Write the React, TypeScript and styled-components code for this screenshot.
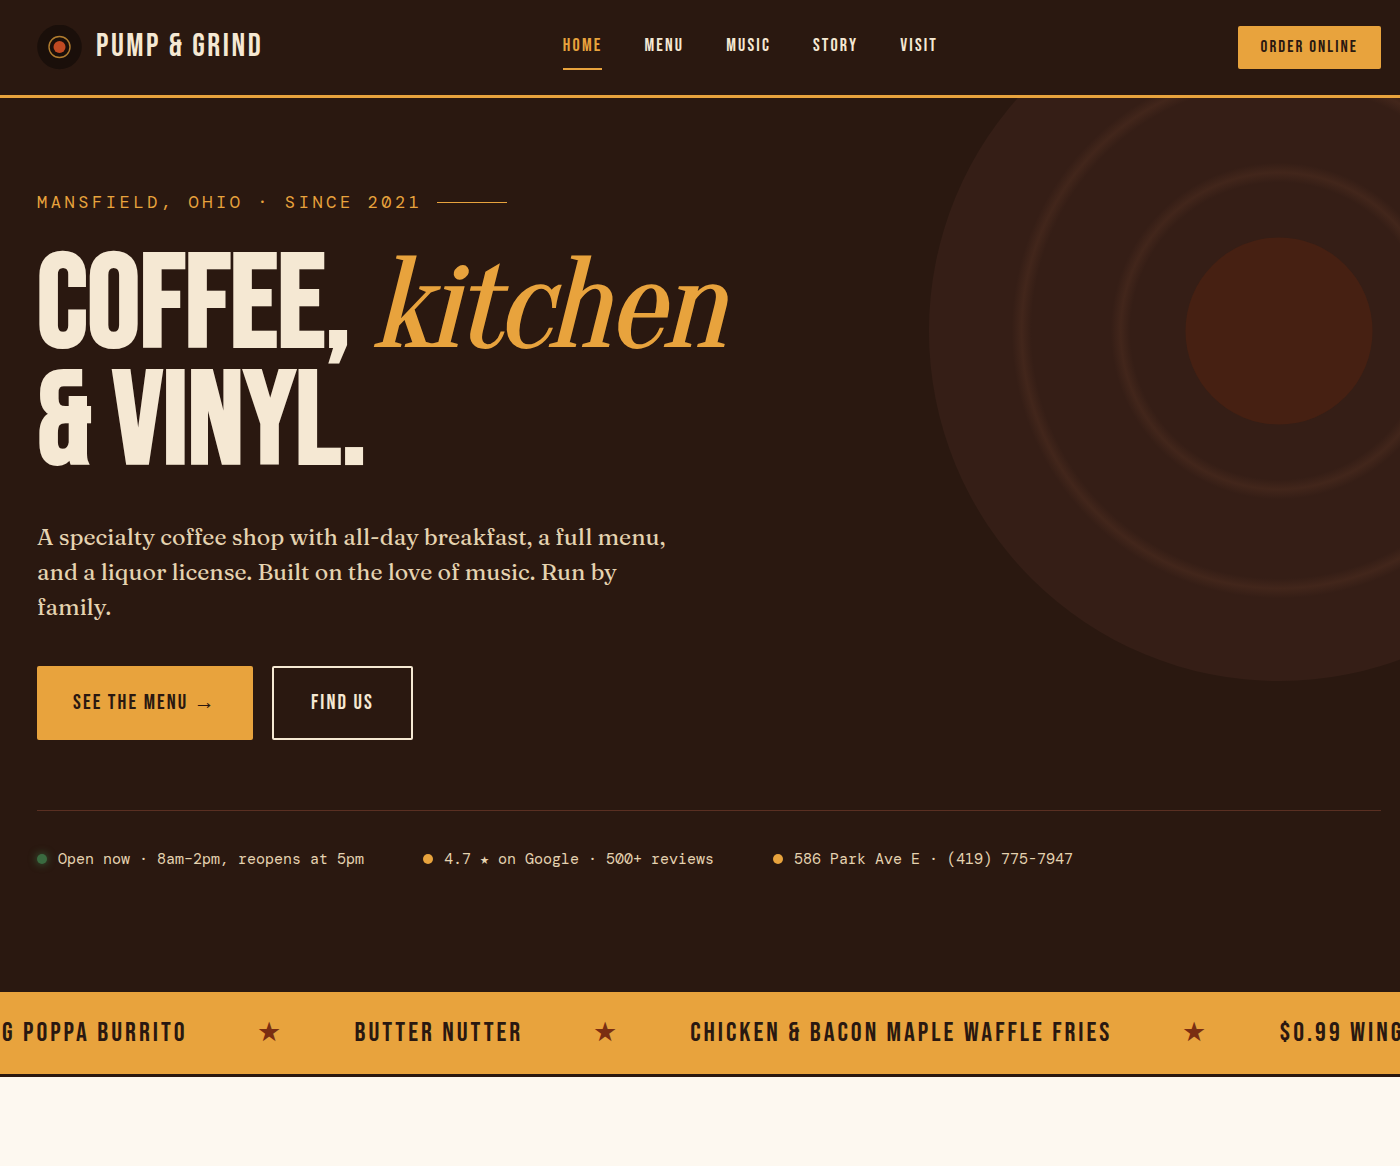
import React from "react";
import styled, { createGlobalStyle } from "styled-components";

const color = {
  espresso: "#2a1810",
  black: "#1a0f0a",
  cream: "#f5e8d3",
  sand: "#e5d3b0",
  amber: "#e8a33d",
  rust: "#7a2e12",
  ember: "#c14a22",
  line: "#5a2f22",
  green: "#3a6b40",
  paper: "#fdf8f0",
};
const display = `"Bebas Neue", "Liberation Sans", sans-serif`;
const serif = `Fraunces, "Liberation Serif", serif`;
const mono = `"DM Mono", "DejaVu Sans Mono", monospace`;

const GlobalStyle = createGlobalStyle`
  * { box-sizing: border-box; }
  body { margin: 0; background: ${color.paper}; color: ${color.espresso}; font-family: ${serif}; }
  a { color: inherit; text-decoration: none; }
`;
const Page = styled.div`
  min-height: 100vh;
  overflow-x: hidden;
`;
const Header = styled.header`
  display: flex;
  align-items: center;
  justify-content: space-between;
  padding: 25px 19px 25px 37px;
  background: ${color.espresso};
  border-bottom: 3px solid ${color.amber};
`;
const Brand = styled.a`
  display: flex;
  gap: 14px;
  font: 400 32px/44px ${display};
  letter-spacing: 0.08em;
  && { color: ${color.cream}; }
`;
const BrandMark = styled.svg`
  display: block;
  width: 45px;
  height: 45px;
`;
const Nav = styled.nav`
  display: flex;
  gap: 42px;
`;
const NavLink = styled.a<{ $active?: boolean }>`
  padding: 10px 0 11px;
  font: 400 18px/22px ${display};
  letter-spacing: 0.12em;
  border-bottom: 2px solid ${(p) => (p.$active ? color.amber : "transparent")};
  && { color: ${(p) => (p.$active ? color.amber : color.cream)}; }
`;
const OrderButton = styled.button`
  padding: 12px 23px;
  border: 0;
  border-radius: 2px;
  background: ${color.amber};
  color: ${color.espresso};
  font: 400 17px/19px ${display};
  letter-spacing: 0.12em;
  cursor: pointer;
`;
const Hero = styled.section`
  position: relative;
  overflow: hidden;
  padding: 92px 19px 121px 37px;
  background: ${color.espresso};
`;
const Record = styled.svg`
  position: absolute;
  top: -117px;
  right: -229px;
  width: 700px;
  height: 700px;
`;
const HeroBody = styled.div`
  position: relative;
`;
const Eyebrow = styled.p`
  display: flex;
  align-items: center;
  gap: 14px;
  margin: 0 0 34px;
  color: ${color.amber};
  font: 400 17px/24px ${mono};
  letter-spacing: 0.21em;
  &::after {
    content: "";
    width: 70px;
    height: 1px;
    background: currentColor;
  }
`;
const Title = styled.h1`
  margin: 0 0 38px;
  color: ${color.cream};
  font: 700 131px/117px ${display};
`;
const Accent = styled.em`
  color: ${color.amber};
  font: italic 400 128px/1px Oranienbaum, ${serif};
  letter-spacing: -0.03em;
  -webkit-text-stroke: 2px ${color.amber};
`;
const Lede = styled.p`
  max-width: 654px;
  margin: 0 0 41px;
  color: ${color.sand};
  font: 400 23px/35px ${serif};
`;
const Actions = styled.div`
  display: flex;
  gap: 19px;
  margin-bottom: 70px;
`;
const Action = styled.a<{ $solid?: boolean }>`
  padding: ${(p) => (p.$solid ? "25px 36px" : "23px 37px")};
  border: ${(p) => (p.$solid ? "0" : `2px solid ${color.cream}`)};
  border-radius: 2px;
  background: ${(p) => (p.$solid ? color.amber : "transparent")};
  font: 400 21px/24px ${display};
  letter-spacing: 0.1em;
  && { color: ${(p) => (p.$solid ? color.espresso : color.cream)}; }
`;
const Facts = styled.ul`
  display: flex;
  flex-wrap: wrap;
  gap: 14px 59px;
  margin: 0;
  padding: 36px 0 0;
  border-top: 1px solid ${color.line};
  list-style: none;
  color: ${color.sand};
  font: 400 15px/24px ${mono};
`;
const Fact = styled.li`
  display: flex;
  align-items: center;
  gap: 11px;
`;
const Dot = styled.span<{ $live?: boolean }>`
  width: 10px;
  height: 10px;
  border-radius: 50%;
  background: ${(p) => (p.$live ? color.green : color.amber)};
  box-shadow: ${(p) => (p.$live ? `0 0 9px ${color.green}` : "none")};
`;
const Ticker = styled.div`
  overflow: hidden;
  background: ${color.amber};
  border-bottom: 3px solid ${color.espresso};
`;
const TickerTrack = styled.div`
  display: flex;
  margin-left: -20px;
  padding: 23px 0 22px;
`;
const TickerItem = styled.span`
  flex: none;
  padding-right: 70px;
  font: 400 27px/37px ${display};
  letter-spacing: 3px;
`;
const Star = styled(TickerItem)`
  color: ${color.rust};
`;

const links = ["Home", "Menu", "Music", "Story", "Visit"];
const ticker = ["Big Poppa Burrito", "Butter Nutter", "Chicken & Bacon Maple Waffle Fries", "$0.99 Wings"];

export default function App() {
  return (
    <Page>
      <GlobalStyle />
      <Header>
        <Brand href="#home">
          <BrandMark viewBox="0 0 45 45" aria-hidden="true">
            <circle cx="22.5" cy="22" r="22.3" fill={color.black} />
            <circle cx="22.5" cy="22" r="10.5" fill="none" stroke="#b07c2f" strokeWidth="1.4" />
            <circle cx="22.5" cy="22" r="6" fill={color.ember} />
          </BrandMark>
          Pump &amp; Grind
        </Brand>
        <Nav aria-label="Main">
          {links.map((name, i) => (
            <NavLink key={name} href={`#${name.toLowerCase()}`} $active={i === 0}>
              {name}
            </NavLink>
          ))}
        </Nav>
        <OrderButton type="button">Order Online</OrderButton>
      </Header>
      <Hero>
        <Record viewBox="0 0 700 700" aria-hidden="true">
          <defs>
            <radialGradient id="grooves" gradientUnits="userSpaceOnUse" cx="350" cy="350" r="495">
              <stop offset="0.3" stopColor="#351e16" />
              <stop offset="0.32" stopColor="#42261b" />
              <stop offset="0.34" stopColor="#351e16" />
              <stop offset="0.5" stopColor="#351e16" />
              <stop offset="0.52" stopColor="#42261b" />
              <stop offset="0.54" stopColor="#351e16" />
            </radialGradient>
          </defs>
          <circle cx="350" cy="350" r="350" fill="url(#grooves)" />
          <circle cx="350" cy="350" r="93.5" fill="#462012" />
        </Record>
        <HeroBody>
          <Eyebrow>MANSFIELD, OHIO · SINCE 2021</Eyebrow>
          <Title>
            Coffee, <Accent>kitchen</Accent>
            <br />
            &amp; Vinyl.
          </Title>
          <Lede>
            A specialty coffee shop with all-day breakfast, a full menu, and a liquor license. Built on
            the love of music. Run by family.
          </Lede>
          <Actions>
            <Action href="#menu" $solid>See the Menu →</Action>
            <Action href="#visit">Find Us</Action>
          </Actions>
          <Facts>
            <Fact><Dot $live />Open now · 8am–2pm, reopens at 5pm</Fact>
            <Fact><Dot />4.7 ★ on Google · 500+ reviews</Fact>
            <Fact><Dot />586 Park Ave E · (419) 775-7947</Fact>
          </Facts>
        </HeroBody>
      </Hero>
      <Ticker>
        <TickerTrack>
          {ticker.map((name, i) => (
            <React.Fragment key={name}>
              {i > 0 && <Star aria-hidden="true">★</Star>}
              <TickerItem>{name}</TickerItem>
            </React.Fragment>
          ))}
        </TickerTrack>
      </Ticker>
    </Page>
  );
}
